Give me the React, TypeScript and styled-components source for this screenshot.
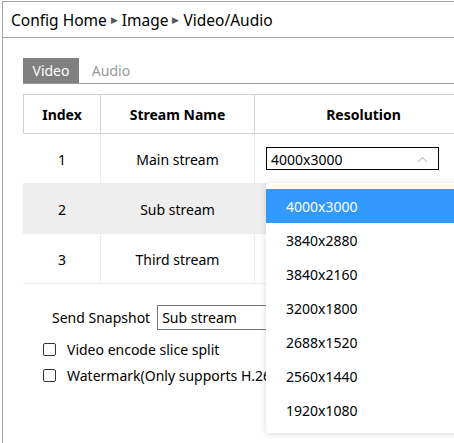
import styled, { createGlobalStyle } from "styled-components"

const GlobalStyle = createGlobalStyle`
    body {
        margin: 0;
        overflow: hidden;
        background: #fff;
        font-family: "Noto Sans", "Open Sans", sans-serif;
        color: #000;
    }
`

const Page = styled.div`
    width: 454px;
    height: 443px;
    overflow: hidden;
    padding-top: 1px;
    box-sizing: border-box;
`

const Frame = styled.div`
    margin-left: 2px;
    border-top: 1px solid #a6a6a6;
    border-left: 1px solid #a6a6a6;
    height: 100%;
`

const Crumbs = styled.div`
    height: 35px;
    display: flex;
    align-items: center;
    gap: 4px;
    padding-left: 8px;
    font-size: 15.5px;
    border-bottom: 1px solid #a6a6a6;
`

const Arrow = styled.span`
    font-size: 9px;
    color: #555;
`

const Content = styled.div`
    padding: 20px 0 0 20px;
`

const Tabs = styled.div`
    display: flex;
    height: 25px;
    border-bottom: 1px solid #9a9a9a;
`

const Tab = styled.div<{ $active?: boolean }>`
    width: 56px;
    display: flex;
    align-items: center;
    justify-content: center;
    font-size: 14px;
    padding-left: ${p => (p.$active ? "0" : "4px")};
    background: ${p => (p.$active ? "#808080" : "transparent")};
    color: ${p => (p.$active ? "#fff" : "#999")};
`

const Table = styled.div`
    margin-top: 10px;
    width: 449px;
    display: grid;
    grid-template-columns: 77px 154px 218px;
`

const Head = styled.div`
    height: 40px;
    display: flex;
    align-items: center;
    justify-content: center;
    font-weight: bold;
    font-size: 14px;
    box-sizing: border-box;
    border-top: 1px solid #d2d2d2;
    border-bottom: 1px solid #d2d2d2;
    border-left: 1px solid #d2d2d2;
`

const Cell = styled.div<{ $shade?: boolean; $first?: boolean }>`
    height: 50px;
    display: flex;
    align-items: center;
    justify-content: center;
    padding-top: 2px;
    font-size: 14px;
    box-sizing: border-box;
    background: ${p => (p.$shade ? "#eeeeee" : "#fff")};
    border-bottom: 1px solid #ececec;
    border-left: 1px solid ${p => (p.$first ? "transparent" : "#ececec")};
`

const ResCell = styled(Cell)`
    justify-content: flex-start;
    padding: 0 0 0 11px;
    position: relative;
`

const Select = styled.div`
    width: 173px;
    height: 23px;
    box-sizing: border-box;
    border: 1px solid #000;
    display: flex;
    align-items: center;
    justify-content: space-between;
    padding: 1px 10px 0 4px;
    font-size: 14px;
`

const Menu = styled.div`
    position: absolute;
    left: 11px;
    top: 49px;
    width: 200px;
    padding: 6px 0;
    background: #fff;
    border-radius: 4px;
    box-shadow: 0 1px 6px rgba(0, 0, 0, 0.15);
    z-index: 2;
`

const Option = styled.div<{ $on?: boolean }>`
    height: 34px;
    display: flex;
    align-items: center;
    padding-left: 20px;
    font-size: 14px;
    background: ${p => (p.$on ? "#3399ff" : "#fff")};
    color: ${p => (p.$on ? "#fff" : "#000")};
`

const SnapRow = styled.div`
    margin-top: 21px;
    padding-left: 29px;
    display: flex;
    align-items: center;
    gap: 7px;
    font-size: 14px;
`

const SnapSelect = styled.div`
    width: 200px;
    height: 25px;
    box-sizing: border-box;
    border: 1px solid #777;
    display: flex;
    align-items: center;
    padding-left: 4px;
`

const Checks = styled.div`
    margin-top: 9px;
    padding-left: 20px;
    display: flex;
    flex-direction: column;
    gap: 6px;
`

const CheckRow = styled.label`
    display: flex;
    align-items: center;
    gap: 11px;
    font-size: 14px;
    height: 20px;
    white-space: nowrap;
`

const Box = styled.span`
    width: 13px;
    height: 13px;
    box-sizing: border-box;
    border: 1px solid #333;
    border-radius: 2px;
`

const rows = [
    { index: "1", name: "Main stream" },
    { index: "2", name: "Sub stream" },
    { index: "3", name: "Third stream" },
]

const resolutions = ["4000x3000", "3840x2880", "3840x2160", "3200x1800", "2688x1520", "2560x1440", "1920x1080"]

export default function App() {
    return (
        <Page>
            <GlobalStyle />
            <Frame>
                <Crumbs>
                    <span>Config Home</span>
                    <Arrow>▶</Arrow>
                    <span>Image</span>
                    <Arrow>▶</Arrow>
                    <span>Video/Audio</span>
                </Crumbs>
                <Content>
                    <Tabs>
                        <Tab $active>Video</Tab>
                        <Tab>Audio</Tab>
                    </Tabs>
                    <Table>
                        <Head>Index</Head>
                        <Head>Stream Name</Head>
                        <Head>Resolution</Head>
                        {rows.map((r, i) => (
                            <>
                                <Cell key={r.index + "i"} $first $shade={i === 1}>{r.index}</Cell>
                                <Cell key={r.index + "n"} $shade={i === 1}>{r.name}</Cell>
                                {i === 0 ? (
                                    <ResCell key={r.index + "r"}>
                                        <Select>
                                            <span>4000x3000</span>
                                            <svg width="11" height="7" viewBox="0 0 11 7">
                                                <path d="M1 6 L5.5 1.5 L10 6" fill="none" stroke="#c8c8c8" strokeWidth="1.2" />
                                            </svg>
                                        </Select>
                                        <Menu>
                                            {resolutions.map((res, k) => (
                                                <Option key={res} $on={k === 0}>{res}</Option>
                                            ))}
                                        </Menu>
                                    </ResCell>
                                ) : (
                                    <Cell key={r.index + "r"} $shade={i === 1} />
                                )}
                            </>
                        ))}
                    </Table>
                    <SnapRow>
                        <span>Send Snapshot</span>
                        <SnapSelect>Sub stream</SnapSelect>
                    </SnapRow>
                    <Checks>
                        <CheckRow><Box />Video encode slice split</CheckRow>
                        <CheckRow><Box />Watermark(Only supports H.264)</CheckRow>
                    </Checks>
                </Content>
            </Frame>
        </Page>
    )
}
